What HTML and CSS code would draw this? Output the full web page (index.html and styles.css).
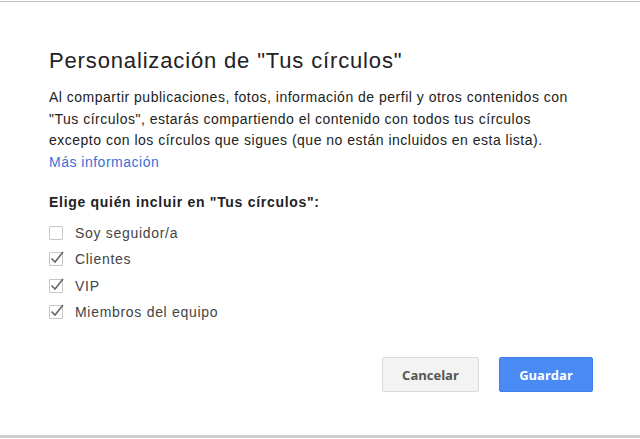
FILE: index.html
```html
<!DOCTYPE html>
<html lang="es">
<head>
<meta charset="utf-8">
<link rel="stylesheet" href="styles.css">
</head>
<body>
<div class="dialog">
  <h1 class="title">Personalización de "Tus círculos"</h1>
  <p class="desc">Al compartir publicaciones, fotos, información de perfil y otros contenidos con "Tus círculos", estarás compartiendo el contenido con todos tus círculos excepto con los círculos que sigues (que no están incluidos en esta lista).<br><a class="link" href="#">Más información</a></p>
  <div class="subtitle">Elige quién incluir en "Tus círculos":</div>
  <ul class="options">
    <li class="option"><span class="box"></span>Soy seguidor/a</li>
    <li class="option"><span class="box"><svg viewBox="0 0 16 16" width="16" height="16"><path d="M2.5 8.5 L6 12 L14 2" fill="none" stroke="#666" stroke-width="1.6"/></svg></span>Clientes</li>
    <li class="option"><span class="box"><svg viewBox="0 0 16 16" width="16" height="16"><path d="M2.5 8.5 L6 12 L14 2" fill="none" stroke="#666" stroke-width="1.6"/></svg></span>VIP</li>
    <li class="option"><span class="box"><svg viewBox="0 0 16 16" width="16" height="16"><path d="M2.5 8.5 L6 12 L14 2" fill="none" stroke="#666" stroke-width="1.6"/></svg></span>Miembros del equipo</li>
  </ul>
  <div class="actions">
    <button class="btn btn-cancel">Cancelar</button>
    <button class="btn btn-save">Guardar</button>
  </div>
</div>
</body>
</html>
```
FILE: styles.css
```css
html, body {
  margin: 0;
  padding: 0;
  background: #fff;
}
body {
  font-family: "Liberation Sans", Arial, sans-serif;
  color: #222;
}
.dialog {
  box-sizing: border-box;
  height: 437px;
  margin-top: 1px;
  border-top: 1px solid #c4c4c4;
  border-bottom: 3px solid #cfcfcf;
  padding: 0 47px 0 49px;
  display: flex;
  flex-direction: column;
}
.title {
  margin: 44px 0 0;
  font-size: 22px;
  letter-spacing: 0.85px;
  font-weight: normal;
  line-height: 30px;
  color: #222;
}
.desc {
  width: 532px;
  margin: 11px 0 0;
  font-size: 14px;
  letter-spacing: 0.5px;
  line-height: 21.7px;
  color: #222;
}
.link {
  color: #3b6fd6;
  text-decoration: none;
}
.subtitle {
  margin-top: 18px;
  font-size: 14px;
  letter-spacing: 0.7px;
  font-weight: bold;
  line-height: 20px;
}
.options {
  list-style: none;
  margin: 8px 0 0;
  padding: 0;
}
.option {
  display: flex;
  align-items: center;
  height: 26.3px;
  font-size: 14px;
  letter-spacing: 0.7px;
  color: #444;
}
.box {
  position: relative;
  box-sizing: border-box;
  width: 14px;
  height: 14px;
  border: 1px solid #c6c6c6;
  border-radius: 1px;
  margin-right: 12px;
  flex: none;
}
.box svg {
  position: absolute;
  left: -1px;
  top: -3px;
}
.actions {
  margin-top: 32px;
  display: flex;
  justify-content: flex-end;
  gap: 20px;
}
.btn {
  height: 35px;
  border-radius: 2px;
  font-family: "Open Sans", "Liberation Sans", sans-serif;
  font-size: 13px;
  font-weight: bold;
  padding: 0;
}
.btn-cancel {
  width: 97px;
  background: #f3f3f3;
  border: 1px solid #dadada;
  color: #555;
}
.btn-save {
  width: 94px;
  background: #4a8af4;
  border: 1px solid #3f7fe9;
  color: #fff;
}
```
